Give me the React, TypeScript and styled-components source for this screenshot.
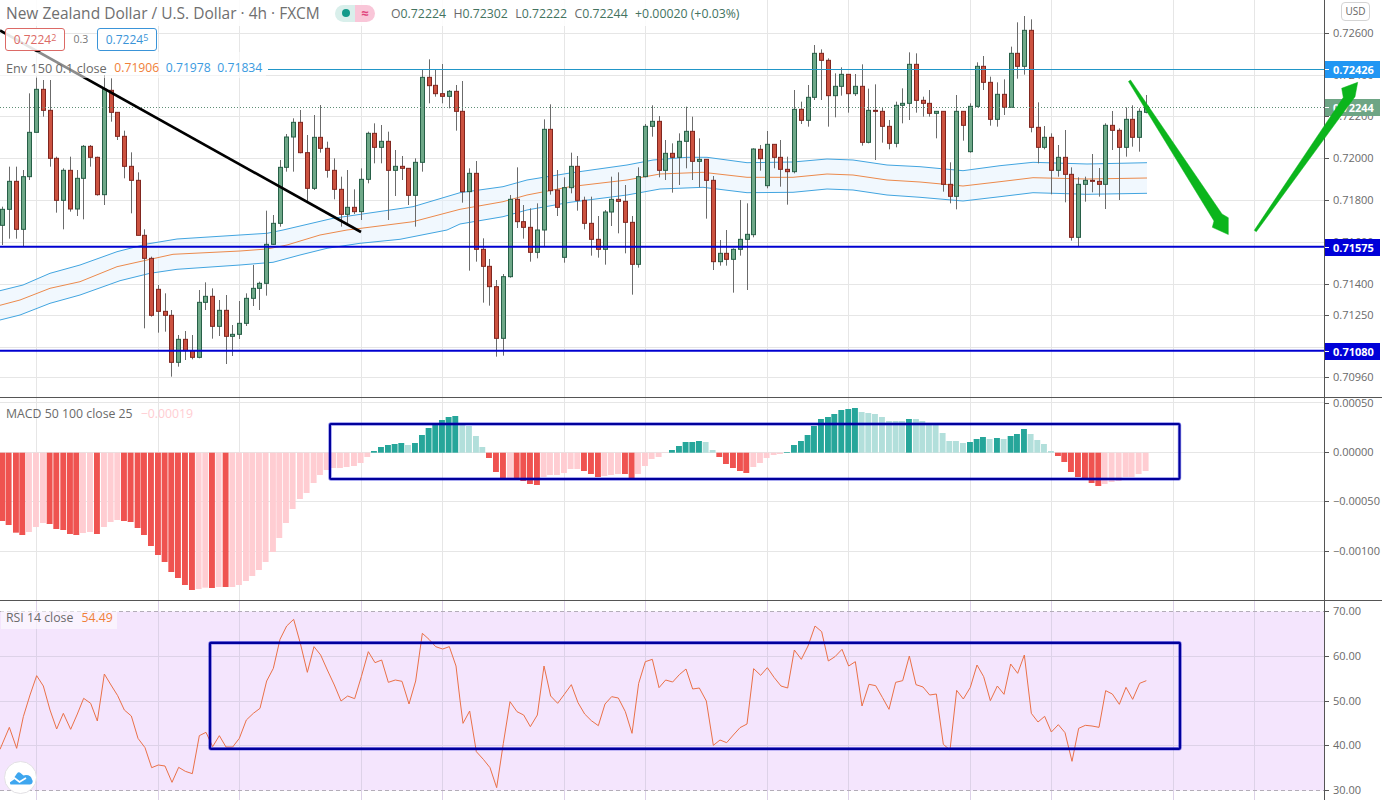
import React from "react";
import styled, { createGlobalStyle } from "styled-components";

const Global = createGlobalStyle`
  html, body { margin: 0; padding: 0; background: #fff; }
  body { font-family: "Open Sans", "Liberation Sans", sans-serif; overflow: hidden; }
  #root { width: 1382px; height: 800px; }
`;

const Page = styled.div`
  width: 1382px; height: 800px; display: flex; flex-direction: column; overflow: hidden; background: #fff;
`;
const Pane = styled.section<{ $h: number; $border?: boolean }>`
  position: relative; height: ${p => p.$h}px; flex: none; display: flex; overflow: hidden; box-sizing: border-box;
  ${p => p.$border ? "border-bottom: 1px solid #555;" : ""}
`;
const Plot = styled.div`
  position: relative; width: 1324px; flex: none; height: 100%;
`;
const ChartSvg = styled.svg`
  display: block; width: 100%; height: 100%;
`;
const Axis = styled.div`
  position: relative; flex: 1; border-left: 1px solid #555; height: 100%;
`;
const AxisLabel = styled.span<{ $y: number }>`
  position: absolute; left: 8px; top: ${p => p.$y}px; transform: translateY(-50%);
  font-size: 11px; line-height: 10px; color: #6a6a6a; white-space: nowrap;
  &::before { content: ""; position: absolute; left: -8px; top: 5px; width: 4px; height: 1px; background: #555; }
`;
const AxisTag = styled.span<{ $y: number; $bg: string }>`
  position: absolute; left: 0; top: ${p => p.$y}px; width: 55px; height: 17px; box-sizing: border-box; padding-left: 8px;
  background: ${p => p.$bg}; color: #fff; font-size: 11px; font-weight: 700; line-height: 17px;
  &::before { content: ""; position: absolute; left: 0; top: 8px; width: 4px; height: 1px; background: #fff; }
`;
const UsdButton = styled.span`
  position: absolute; left: 16px; top: 2px; width: 29px; height: 19px; box-sizing: border-box;
  border: 1px solid #d4d4d4; border-radius: 4px; font-size: 10px; color: #666; text-align: center; line-height: 17px; background: #fff;
`;
const Overlay = styled.svg`
  position: absolute; left: 0; top: 0; width: 1382px; height: 397px; pointer-events: none;
`;
const Legend = styled.div`
  position: absolute; left: 0; top: 0; display: flex; flex-direction: column; align-items: flex-start;
`;
const TitleRow = styled.div`
  display: flex; align-items: center; height: 26px; padding-left: 6px; background: rgba(255,255,255,.85);
`;
const Title = styled.span`
  font-size: 15.5px; color: #6f6f6f; white-space: nowrap; width: 329px;
`;
const Pill = styled.span`
  display: flex; width: 40px; height: 17px; border-radius: 9px; overflow: hidden; margin-right: 16px;
`;
const PillLeft = styled.span`
  width: 20px; background: #d9efeb; display: flex; align-items: center; justify-content: center;
  &::after { content: ""; width: 8px; height: 8px; border-radius: 50%; background: #139a8a; margin-left: 2px; }
`;
const PillRight = styled.span`
  width: 20px; background: #f9c6d8; color: #e0447c; font-size: 13px; line-height: 16px; text-align: center; font-weight: 700;
`;
const Ohlc = styled.span`
  display: flex; gap: 7.4px; font-size: 12.3px; color: #44735f; white-space: nowrap; padding-right: 4px;
`;
const OhlcKey = styled.span`
  color: #6a6a6a;
`;
const TradeRow = styled.div`
  display: flex; align-items: center; height: 26px; padding-left: 5px;
`;
const TradeBox = styled.span<{ $color: string }>`
  width: 60px; height: 23px; box-sizing: border-box; border: 1px solid ${p => p.$color}; border-radius: 3px; background: rgba(255,255,255,.9);
  color: ${p => p.$color}; font-size: 12px; line-height: 21px; text-align: center; white-space: nowrap;
`;
const Sup = styled.sup`
  font-size: 9px; line-height: 0; vertical-align: 3px;
`;
const Spread = styled.span`
  width: 32px; text-align: center; font-size: 10.5px; color: #777;
`;
const EnvRow = styled.div`
  display: flex; align-items: flex-end; gap: 6.5px; height: 26px; padding: 0 4px 0 6px; background: rgba(255,255,255,.55); font-size: 12.2px; line-height: 20px; white-space: nowrap;
`;
const EnvName = styled.span`
  color: #6a6a6a; font-size: 12.7px; margin-right: 1px;
`;
const PaneLegend = styled.div<{ $top: number; $bg?: string; $lh: number }>`
  position: absolute; left: 1px; top: ${p => p.$top}px; display: flex; gap: 8px; padding: 0 4px 0 5px; height: 18px; line-height: ${p => p.$lh}px;
  font-size: 12.3px; color: #6a6a6a; white-space: nowrap; ${p => p.$bg ? `background: ${p.$bg};` : ""}
`;
const Val = styled.span<{ $c: string }>`
  color: ${p => p.$c};
`;
const Logo = styled.svg`
  position: absolute; left: 4px; top: 160px; width: 33px; height: 33px;
`;

const VX = [36, 158, 239, 361, 442, 564, 645, 767, 848, 970, 1051, 1173, 1254];
const HX = [33, 75, 116, 158, 200, 242, 284, 315, 347, 377];

const g = 1, r = 0;
type C = number[];
const c0: C[] = [
[7,620,628,676,735,g],[28,500,544,628,716,g],[50,500,544,688,716,r],[70,510,530,688,740,g],[88,280,397,530,540,g],[109,230,268,397,397,g],[130,240,268,331,350,r],[151,240,331,475,500,r],[170,470,475,601,638,r],[190,505,511,601,688,g],[211,470,511,627,635,r],[232,510,535,627,648,g],[250,435,439,535,658,g],[271,435,439,472,500,r],[292,470,472,584,587,r],[313,225,268,584,615,g],[333,235,271,337,365,r],[352,337,337,409,420,r],[373,392,409,499,535,r],[394,457,499,541,640,r],[415,517,541,706,706,r],[433,688,706,775,985,r],[455,770,775,946,950,r],[475,855,868,934,998,r],[496,880,934,946,995,r],[514,930,946,1087,1130,r],[535,1005,1018,1087,1100,g],[556,993,1018,1052,1080,r],[577,1005,1052,1072,1078,r],[598,870,907,1072,1075,g],[616,847,889,907,930,g],[637,865,889,979,1016,r],[658,900,931,979,1008,g],[679,885,931,1009,1092,r],[697,975,1003,1009,1068,g],[718,903,970,1003,1017,g],[739,880,895,970,978,g],[760,795,865,895,918,g],[778,845,850,865,930,g],[799,632,733,850,887,g],[820,645,670,733,735,g],[842,480,502,670,680,g],[860,402,411,502,515,g],[880,355,367,411,515,g],[901,330,367,458,460,r],[922,405,458,565,605,r],[943,345,412,565,570,g],[961,315,412,445,458,r],[982,425,445,511,533,r],[1003,475,511,568,598,r],[1024,530,568,643,680,r],[1043,510,622,643,670,g],[1063,568,622,635,642,r],[1084,505,538,635,660,g],[1105,395,400,538,550,g],[1123,370,400,442,490,r],[1144,375,424,442,490,g],[1165,395,424,511,660,r],[1186,450,499,511,588,g],[1207,468,499,505,540,r],[1225,505,505,586,615,r],[1246,475,487,586,680,g],[1267,208,232,487,515,g],[1288,178,232,257,310,r],[1306,210,256,281,290,r],[1327,192,281,289,310,r],[1348,270,274,289,325,g],[1369,255,274,334,392,r]];
const c1: C[] = [
[7,243,334,575,608,r],[28,505,520,575,812,g],[49,483,520,748,785,r],[70,715,748,799,908,r],[88,777,799,860,917,r],[109,840,860,1015,1070,r],[130,822,830,1015,1067,g],[151,585,598,830,833,g],[172,502,598,665,684,r],[190,615,665,682,716,r],[211,625,682,757,785,r],[232,610,690,757,775,g],[253,358,388,690,738,g],[271,313,388,572,584,r],[292,510,570,622,648,r],[313,532,563,772,788,g],[334,458,499,563,580,g],[352,468,499,601,632,r],[373,590,601,670,688,r],[394,590,670,718,767,r],[415,648,718,748,773,r],[436,630,636,748,794,g],[454,530,598,636,678,g],[475,517,598,604,700,r],[496,555,604,667,760,r],[517,648,667,793,884,r],[535,502,530,793,803,g],[556,372,379,530,532,g],[577,316,364,379,410,g],[598,348,364,511,532,r],[616,420,460,511,540,g],[637,430,460,472,578,r],[658,400,424,472,555,g],[679,320,394,424,505,g],[697,350,394,484,540,r],[718,415,478,484,562,g],[739,478,478,541,656,r],[760,528,541,785,810,r],[781,720,760,785,797,g],[799,690,760,778,797,r],[820,745,748,778,878,g],[841,600,718,748,767,g],[862,610,703,718,870,g],[880,445,447,704,712,g],[901,435,448,476,512,r],[922,393,433,557,565,g],[943,433,433,472,505,r],[961,420,472,508,560,r],[982,470,508,515,614,r],[1003,270,328,515,520,g],[1024,305,328,361,372,r],[1045,255,292,361,380,g],[1063,135,160,292,300,g],[1084,148,160,181,300,r],[1105,175,181,287,380,r],[1126,220,259,287,352,g],[1144,202,223,259,287,g],[1165,223,223,281,338,r],[1186,222,259,281,288,g],[1207,193,259,427,437,r],[1225,266,331,427,430,g],[1246,253,331,334,480,r],[1267,322,334,379,428,r],[1288,360,379,430,448,r],[1309,305,316,430,442,g],[1327,265,310,316,370,g],[1348,157,193,310,360,g],[1369,160,193,301,338,r]];
const c2: C[] = [
[10,290,301,310,350,r],[28,270,310,340,350,r],[49,334,334,340,415,g],[70,334,334,553,575,r],[91,487,553,589,610,r],[109,285,334,589,628,g],[130,334,334,376,422,r],[151,310,319,455,458,g],[172,187,199,319,322,g],[190,168,199,247,270,r],[211,230,247,358,377,r],[232,247,283,358,380,g],[253,238,283,322,345,r],[274,140,160,322,322,g],[292,67,160,199,236,r],[313,48,91,199,224,g],[334,58,91,382,397,r],[355,307,382,442,490,r],[373,378,412,442,448,g],[394,400,412,511,583,r],[415,435,472,511,530,g],[436,390,472,523,607,r],[455,502,523,712,722,r],[475,532,553,712,740,g],[496,530,541,553,605,g],[517,462,541,544,577,r],[538,504,544,553,590,r],[556,370,376,553,627,g],[577,333,376,391,450,r],[598,385,391,442,600,r],[619,322,358,442,470,g],[637,316,358,412,440,r],[658,325,334,412,455,g],[679,285,319,337,340,g]];
const candles = [...c0.map(a => [a[0] / 3, ...a.slice(1)]), ...c1.map(a => [460 + a[0] / 3, ...a.slice(1)]), ...c2.map(a => [920 + a[0] / 3, ...a.slice(1)])];

const b0 = [[7,378,0],[26,390,0],[48,413,0],[67,420,0],[87,411,1],[108,396,1],[129,384,1],[149,387,0],[169,402,0],[190,405,0],[210,417,0],[229,420,0],[249,414,1],[270,411,1],[291,417,0],[312,396,1],[332,381,1],[352,375,1],[372,378,0],[392,381,0],[413,399,0],[432,420,0],[453,453,0],[474,480,0],[494,501,0],[514,531,0],[534,549,0],[555,570,0],[576,585,0],[596,582,1],[616,578,1],[636,579,0],[656,576,1],[677,576,0],[697,576,1],[717,570,1],[738,558,1],[757,543,1],[777,525,1],[797,501,1],[819,471,1],[838,429,1],[858,384,1],[878,342,1],[900,312,1],[920,294,1],[941,264,1],[960,240,1],[980,225,1],[1000,219,1],[1020,219,1],[1040,216,1],[1062,213,1],[1082,204,1],[1102,186,1],[1122,168,2],[1143,156,2],[1164,150,2],[1184,147,2],[1204,144,2],[1224,150,3],[1245,144,2],[1266,120,2],[1286,99,2],[1306,90,2],[1326,75,2],[1346,66,2],[1366,63,2]];
const b1 = [[7,84,3],[27,93,3],[48,123,3],[67,156,3],[87,189,0],[108,231,0],[129,250,0],[150,250,1],[170,250,0],[190,258,0],[210,267,0],[231,270,0],[251,246,1],[270,240,1],[291,240,1],[312,234,1],[332,222,1],[352,222,1],[372,228,0],[393,237,0],[414,246,0],[433,243,1],[453,240,1],[474,237,1],[495,237,0],[515,249,0],[534,237,1],[555,213,1],[575,192,1],[596,186,1],[616,174,1],[636,165,2],[657,153,2],[677,141,2],[697,141,2],[717,138,2],[737,141,3],[758,165,3],[778,186,0],[798,207,0],[819,219,0],[840,228,0],[859,234,0],[880,216,1],[900,204,1],[920,189,1],[941,180,1],[960,177,1],[981,171,2],[1002,150,2],[1023,138,2],[1043,120,2],[1062,93,2],[1083,72,2],[1104,66,2],[1123,57,2],[1144,45,2],[1165,42,2],[1185,39,2],[1205,51,3],[1225,54,3],[1245,57,3],[1266,66,3],[1287,78,3],[1307,78,3],[1326,78,3],[1347,72,2],[1368,72,3]];
const b2 = [[7,78,3],[27,90,3],[47,90,3],[68,114,3],[88,138,3],[108,138,3],[129,144,3],[150,141,2],[170,132,2],[189,126,2],[209,132,3],[231,129,2],[251,132,3],[272,123,2],[291,117,2],[312,102,2],[332,117,3],[352,135,3],[372,147,3],[393,168,3],[414,183,0],[433,201,0],[453,231,0],[474,246,0],[495,250,0],[515,264,0],[535,273,0],[554,267,1],[575,261,1],[596,258,1],[617,246,1],[635,246,1],[656,237,1],[677,228,1]];
const barColors = ["#ef5350", "#ffcdd2", "#26a69a", "#b2dfdb"];
const bars = [...b0.map(a => [a[0] / 3, a[1], a[2]]), ...b1.map(a => [460 + a[0] / 3, a[1], a[2]]), ...b2.map(a => [920 + a[0] / 3, a[1], a[2]])];

const upper = [[0,290.7],[23,285],[50,273.3],[80,265],[117,251.7],[147,244],[177,239],[240,235],[267,233.3],[283,230],[333,218.3],[413,206.7],[460,192.7],[503,186.7],[527,180],[570,173],[627,165],[653,160],[687,157.3],[707,157.3],[747,162.7],[793,162],[827,159],[853,160],[887,165],[920,166.7],[963,170.7],[1000,165.7],[1033,162.3],[1087,164],[1147,162.7]];
const mid = [[0,305.3],[20,300],[50,288.3],[80,281.7],[117,266.7],[147,260],[173,254.3],[240,251],[267,249],[287,245],[320,235],[347,230],[361,228.3],[413,221.7],[460,209.3],[503,201.7],[527,195],[570,186.7],[627,180],[660,174],[703,172.3],[747,177.3],[793,177.3],[827,174],[853,175],[887,180],[920,182],[963,186],[1000,181.7],[1033,177.7],[1087,179],[1147,178]];
const lower = [[0,320],[20,315],[50,303.3],[80,295],[120,280.7],[150,273.3],[177,269.3],[240,265],[273,262.3],[300,255],[327,248.3],[360,243.3],[400,239.3],[447,230],[460,224],[503,216.7],[527,210],[570,202.3],[627,195],[660,189],[703,187.3],[747,192.7],[793,192.3],[827,189],[853,190],[887,195],[920,197.3],[963,201],[1000,196.7],[1033,192.7],[1087,194.3],[1147,193.3]];
const pts = (a: number[][]) => a.map(p => p.join(",")).join(" ");

const r0 = [[0,448],[28,382],[50,445],[70,350],[90,285],[110,227],[130,258],[150,330],[170,387],[190,340],[212,388],[232,342],[251,295],[272,310],[292,363],[313,222],[333,255],[353,287],[373,330],[394,348],[414,415],[435,443],[455,503],[475,495],[495,498],[516,547],[536,502],[556,514],[577,521],[598,407],[618,397],[638,440],[658,407],[678,441],[698,441],[718,415],[739,360],[760,340],[780,325],[800,243],[820,205],[840,118],[860,78],[881,58],[901,130],[922,217],[942,140],[962,165],[982,210],[1003,255],[1023,303],[1043,288],[1064,296],[1084,230],[1105,155],[1125,188],[1145,180],[1165,247],[1186,240],[1206,244],[1227,312],[1247,243],[1267,100],[1287,118],[1307,140],[1328,147],[1348,140],[1368,198],[1380,300]];
const r1 = [[9,370],[29,333],[49,455],[70,478],[90,503],[110,563],[130,430],[150,305],[171,335],[191,345],[211,380],[232,345],[252,198],[272,288],[293,310],[313,283],[334,254],[354,308],[374,342],[394,362],[415,377],[435,312],[455,290],[475,294],[496,335],[516,400],[536,250],[556,185],[577,178],[597,263],[617,240],[638,246],[658,224],[678,207],[698,267],[718,264],[739,303],[760,436],[780,420],[800,428],[820,405],[840,383],[861,372],[881,206],[902,226],[922,203],[942,232],[963,258],[983,264],[1003,150],[1024,178],[1044,138],[1065,78],[1085,95],[1105,183],[1125,170],[1146,148],[1166,198],[1186,185],[1206,318],[1227,253],[1247,257],[1267,292],[1287,328],[1307,247],[1328,242],[1348,168],[1368,254]];
const r2 = [[9,261],[29,285],[49,282],[70,433],[90,450],[110,271],[130,297],[151,262],[171,195],[191,230],[211,302],[232,258],[252,283],[272,192],[293,220],[313,165],[334,340],[354,366],[374,349],[394,396],[415,374],[435,398],[456,484],[476,385],[496,376],[516,378],[537,382],[557,272],[577,282],[598,313],[618,262],[638,298],[659,250],[679,242]];
const rsi = [...r0.map(p => [p[0] / 3, 600 + p[1] / 3]), ...r1.map(p => [460 + p[0] / 3, 600 + p[1] / 3]), ...r2.map(p => [920 + p[0] / 3, 600 + p[1] / 3])];

function Grid({ hs, top, bottom, color = "#e6e6e6" }: { hs: number[]; top: number; bottom: number; color?: string }) {
  return (
    <g stroke={color} strokeWidth={1} shapeRendering="crispEdges">
      {VX.map(x => <line key={x} x1={x + 0.5} x2={x + 0.5} y1={top} y2={bottom} />)}
      {hs.map(y => <line key={y} x1={0} x2={1324} y1={y + 0.5} y2={y + 0.5} />)}
    </g>
  );
}

function Candles() {
  return (
    <g>
      {candles.map((a, i) => {
        const [x, hi, top, bot, lo, up] = a;
        const cx = Math.round(x - 0.5) + 0.5;
        return (
          <g key={i}>
            <line x1={cx} x2={cx} y1={hi / 3} y2={lo / 3} stroke="#6b6b6b" strokeWidth={1} />
            <rect x={cx - 2} y={top / 3} width={4} height={Math.max((bot - top) / 3, 1)}
              fill={up ? "#6ea888" : "#cc5240"} stroke={up ? "#275f47" : "#80261f"} strokeWidth={1} />
          </g>
        );
      })}
    </g>
  );
}

function MainPlot() {
  return (
    <ChartSvg viewBox="0 0 1324 397" preserveAspectRatio="none">
      <Grid hs={HX} top={0} bottom={397} />
      <polygon points={pts([...upper, ...[...lower].reverse()])} fill="#e3f2fd" fillOpacity={0.5} />
      <polyline points={pts(upper)} fill="none" stroke="#42a5e0" strokeWidth={1} />
      <polyline points={pts(lower)} fill="none" stroke="#42a5e0" strokeWidth={1} />
      <polyline points={pts(mid)} fill="none" stroke="#ec8a4c" strokeWidth={1} />
      <Candles />
      <line x1={268} x2={1324} y1={69.5} y2={69.5} stroke="#2196c8" strokeWidth={1} />
      <line x1={0} x2={1324} y1={107.5} y2={107.5} stroke="#5f8f76" strokeWidth={1} strokeDasharray="1 2" />
      <line x1={0} x2={1324} y1={246.7} y2={246.7} stroke="#0000d0" strokeWidth={2} />
      <line x1={0} x2={1324} y1={350.7} y2={350.7} stroke="#0000d0" strokeWidth={2} />
      <line x1={0} y1={30.5} x2={361} y2={232} stroke="#000" strokeWidth={2.6} />
    </ChartSvg>
  );
}

function MacdPlot() {
  return (
    <ChartSvg viewBox="0 398 1324 202" preserveAspectRatio="none">
      <Grid hs={[402, 452, 501, 551]} top={398} bottom={600} />
      {bars.map((b, i) => {
        const y = 395 + b[1] / 3;
        const zero = 452.7;
        return <rect key={i} x={b[0] - 3} width={5.9} y={Math.min(y, zero)} height={Math.abs(y - zero)} fill={barColors[b[2]]} />;
      })}
      <rect x={330} y={424} width={849.5} height={55} rx={1} fill="none" stroke="#0000d0" strokeOpacity={0.45} strokeWidth={3.4} />
      <rect x={330} y={424} width={849.5} height={55} rx={1} fill="none" stroke="#00009c" strokeWidth={2} />
    </ChartSvg>
  );
}

function RsiPlot() {
  return (
    <ChartSvg viewBox="0 601 1324 199" preserveAspectRatio="none">
      <rect x={0} y={611.5} width={1324} height={179} fill="#f4e5fd" />
      <Grid hs={[656, 701, 745]} top={601} bottom={800} color="#ddd2e8" />
      <line x1={0} x2={1324} y1={611.5} y2={611.5} stroke="#b3adb8" strokeDasharray="4 3" />
      <line x1={0} x2={1324} y1={790.5} y2={790.5} stroke="#b3adb8" strokeDasharray="4 3" />
      <polyline points={pts(rsi)} fill="none" stroke="#ea7148" strokeWidth={1} />
      <rect x={210} y={642.8} width={970} height={106} rx={1} fill="none" stroke="#0000d0" strokeOpacity={0.45} strokeWidth={3.4} />
      <rect x={210} y={642.8} width={970} height={106} rx={1} fill="none" stroke="#00009c" strokeWidth={2.2} />
    </ChartSvg>
  );
}

export default function App() {
  return (
    <Page>
      <Global />
      <Pane $h={398} $border>
        <Plot>
          <MainPlot />
          <Legend>
            <TitleRow>
              <Title>New Zealand Dollar / U.S. Dollar · 4h · FXCM</Title>
              <Pill><PillLeft /><PillRight>≈</PillRight></Pill>
              <Ohlc>
                <span><OhlcKey>O</OhlcKey>0.72224</span>
                <span><OhlcKey>H</OhlcKey>0.72302</span>
                <span><OhlcKey>L</OhlcKey>0.72222</span>
                <span><OhlcKey>C</OhlcKey>0.72244</span>
                <span>+0.00020 (+0.03%)</span>
              </Ohlc>
            </TitleRow>
            <TradeRow>
              <TradeBox $color="#dc6a66">0.7224<Sup>2</Sup></TradeBox>
              <Spread>0.3</Spread>
              <TradeBox $color="#3a94d8">0.7224<Sup>5</Sup></TradeBox>
            </TradeRow>
            <EnvRow>
              <EnvName>Env 150 0.1 close</EnvName>
              <Val $c="#f08038">0.71906</Val>
              <Val $c="#3a9ae0">0.71978</Val>
              <Val $c="#3a9ae0">0.71834</Val>
            </EnvRow>
          </Legend>
        </Plot>
        <Axis>
          <AxisLabel $y={33}>0.72600</AxisLabel>
          <AxisLabel $y={75}>0.72400</AxisLabel>
          <AxisLabel $y={116}>0.72200</AxisLabel>
          <AxisLabel $y={158}>0.72000</AxisLabel>
          <AxisLabel $y={200}>0.71800</AxisLabel>
          <AxisLabel $y={242}>0.71600</AxisLabel>
          <AxisLabel $y={284}>0.71400</AxisLabel>
          <AxisLabel $y={315}>0.71250</AxisLabel>
          <AxisLabel $y={377}>0.70960</AxisLabel>
          <AxisTag $y={61} $bg="#2196f3">0.72426</AxisTag>
          <AxisTag $y={99} $bg="#6ea585">0.72244</AxisTag>
          <AxisTag $y={239} $bg="#0000d8">0.71575</AxisTag>
          <AxisTag $y={343} $bg="#0000d8">0.71080</AxisTag>
          <UsdButton>USD</UsdButton>
        </Axis>
        <Overlay viewBox="0 0 1382 397">
          <polygon points="1128.5,81.5 1130.5,80 1222,214 1228.3,217.7 1228.3,234.5 1212.3,227.3 1214,221" fill="#0bb51c" stroke="#0bb51c" strokeWidth={0.5} strokeLinejoin="round" />
          <polygon points="1254.3,230.3 1343.3,97.4 1341.7,88.3 1357.7,82.3 1355,96.7 1350.7,102.6 1256.3,231.7" fill="#0bb51c" stroke="#0bb51c" strokeWidth={0.5} strokeLinejoin="round" />
        </Overlay>
      </Pane>
      <Pane $h={203} $border>
        <Plot>
          <MacdPlot />
          <PaneLegend $top={7} $lh={18}>
            MACD 50 100 close 25
            <Val $c="#ffcdd2">−0.00019</Val>
          </PaneLegend>
        </Plot>
        <Axis>
          <AxisLabel $y={5}>0.00050</AxisLabel>
          <AxisLabel $y={54}>0.00000</AxisLabel>
          <AxisLabel $y={103}>−0.00050</AxisLabel>
          <AxisLabel $y={153}>−0.00100</AxisLabel>
        </Axis>
      </Pane>
      <Pane $h={199}>
        <Plot>
          <RsiPlot />
          <PaneLegend $top={10} $lh={13} $bg="rgba(255,255,255,.55)">
            RSI 14 close
            <Val $c="#f08038">54.49</Val>
          </PaneLegend>
          <Logo viewBox="0 0 33 33">
            <circle cx={16.5} cy={16.5} r={16} fill="#fff" stroke="#e2e0e4" strokeWidth={1} />
            <path d="M6.5 23.5 C5 20.5 7 18 9.5 17.5 L13 12.5 Q14.5 10.5 16.5 12 L19.5 14.5 L22 14 C25.5 14 27.5 16 28 18.5 C29.5 20 28.5 23.5 26 23.5 Z" fill="#3ea6ef" />
            <polyline points="5.5,20.5 10.5,17 15.5,21 22,17" fill="none" stroke="#fff" strokeWidth={1.8} />
          </Logo>
        </Plot>
        <Axis>
          <AxisLabel $y={10}>70.00</AxisLabel>
          <AxisLabel $y={55}>60.00</AxisLabel>
          <AxisLabel $y={100}>50.00</AxisLabel>
          <AxisLabel $y={144}>40.00</AxisLabel>
          <AxisLabel $y={189}>30.00</AxisLabel>
        </Axis>
      </Pane>
    </Page>
  );
}
